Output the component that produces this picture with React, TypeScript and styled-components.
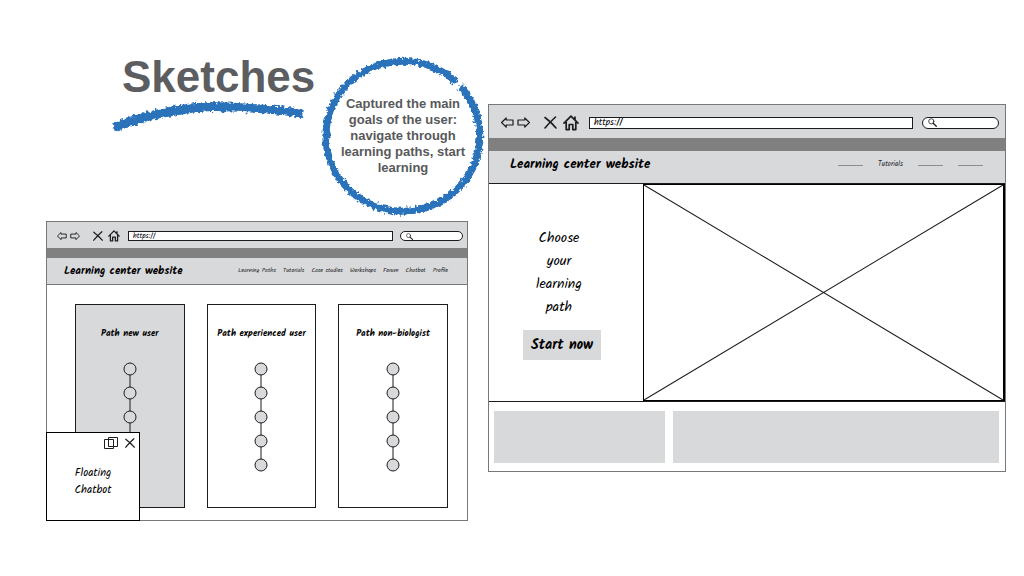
import React from "react";
import styled, { createGlobalStyle, css } from "styled-components";

const ink = "#1c1c1e";
const panel = "#d8d9db";
const band = "#808080";
const edge = "#77787a";
const blue = "#2a72ba";
const sans = '"Liberation Sans", Arial, sans-serif';
const hand = 'Kalam, Lato, "Open Sans", sans-serif';

type Sized = { $compact?: boolean };

const GlobalStyle = createGlobalStyle`
  *, *::before, *::after { box-sizing: border-box; }
  body { margin: 0; background: #fff; color: #000; font-family: ${hand}; }
  h1, h2, p, ul { margin: 0; padding: 0; }
  ul { list-style: none; }
  svg { display: block; overflow: visible; }
  button { border: 0; padding: 0; background: none; color: inherit; font: inherit; }
`;

const Board = styled.main`
  display: grid;
  grid-template-columns: minmax(0, 422fr) minmax(0, 518fr);
  column-gap: 20px;
  align-items: start;
  padding: 57px 18px 48px 46px;
`;

const Column = styled.section<{ $lowered?: boolean }>`
  display: flex;
  flex-direction: column;
  gap: 6px;
  padding-top: ${(p) => (p.$lowered ? "47px" : "0")};
`;

const Intro = styled.header`
  display: flex;
  justify-content: flex-end;
  gap: 6px;
  margin-right: -16px;
`;

const TitleBlock = styled.div`
  display: flex;
  flex-direction: column;
  width: 204px;
`;

const Title = styled.h1`
  padding-left: 10px;
  color: #5c5d60;
  font: bold 44px/40px ${sans};
`;

const Goal = styled.div`
  display: grid;
  place-items: center;
  width: 162px;
  height: 158px;

  > * { grid-area: 1 / 1; }
`;

const GoalText = styled.p`
  width: 130px;
  color: #58595b;
  font: bold 13px/16px ${sans};
  text-align: center;
`;

const Browser = styled.article`
  position: relative;
  border: 1px solid ${edge};
  background: #fff;
`;

const Toolbar = styled.div<Sized>`
  display: flex;
  align-items: center;
  height: ${(p) => (p.$compact ? "26px" : "33px")};
  padding: ${(p) => (p.$compact ? "2px 4px 0 10px" : "2px 6px 0 12px")};
  background: ${panel};
`;

const IconGroup = styled.div<{ $gap: number; $after: number }>`
  display: flex;
  align-items: center;
  gap: ${(p) => p.$gap}px;
  margin-right: ${(p) => p.$after}px;
`;

const fieldBase = css`
  min-width: 0;
  margin: 0;
  border: 1px solid ${ink};
  background: #fff;
  color: #000;
  outline: none;
`;

const Address = styled.input<Sized>`
  ${fieldBase}
  flex: 1;
  height: ${(p) => (p.$compact ? "10px" : "12px")};
  padding: 0 4px;
  font: ${(p) => (p.$compact ? "7px/8px" : "9px/10px")} ${hand};
`;

const SearchBox = styled.label<Sized>`
  ${fieldBase}
  display: flex;
  align-items: center;
  gap: 2px;
  width: ${(p) => (p.$compact ? "63px" : "77px")};
  height: ${(p) => (p.$compact ? "10px" : "12px")};
  margin-left: ${(p) => (p.$compact ? "7px" : "9px")};
  padding: 0 5px;
  border-radius: 6px;
`;

const SearchInput = styled.input`
  flex: 1;
  min-width: 0;
  height: 8px;
  padding: 0;
  border: 0;
  background: none;
  font: 7px/8px ${hand};
  outline: none;
`;

const Band = styled.div<Sized>`
  height: ${(p) => (p.$compact ? "10px" : "13px")};
  background: ${band};
`;

const SiteHeader = styled.div<Sized>`
  display: flex;
  align-items: center;
  justify-content: space-between;
  height: ${(p) => (p.$compact ? "27px" : "32px")};
  padding: ${(p) => (p.$compact ? "0 19px 0 17px" : "0 22px 4px 21px")};
  border-bottom: ${(p) => (p.$compact ? `1px solid ${edge}` : "0")};
  background: ${panel};
`;

const SiteName = styled.h2<Sized>`
  font: bold ${(p) => (p.$compact ? "11px/16px" : "13px/20px")} ${hand};
  white-space: nowrap;
`;

const Nav = styled.nav<Sized>`
  display: flex;
  align-items: center;
  gap: ${(p) => (p.$compact ? "7px" : "15px")};
`;

const NavLink = styled.a<Sized>`
  color: ${ink};
  font: ${(p) => (p.$compact ? "6px/8px" : "7px/10px")} ${hand};
  text-decoration: none;
  white-space: nowrap;
`;

const BlankLink = styled.a`
  width: 25px;
  height: 1px;
  background: #8b8c8e;
`;

const Paths = styled.ul`
  display: grid;
  grid-template-columns: repeat(3, minmax(0, 1fr));
  gap: 22px;
  padding: 19px 19px 12px 28px;
`;

const PathCard = styled.li<{ $active?: boolean }>`
  display: flex;
  flex-direction: column;
  align-items: center;
  gap: 20px;
  height: 204px;
  padding-top: 21px;
  border: 1px solid ${ink};
  background: ${(p) => (p.$active ? panel : "#fff")};
`;

const PathName = styled.h2`
  font: bold 9px/16px ${hand};
  white-space: nowrap;
`;

const Chatbot = styled.aside`
  position: absolute;
  left: -1px;
  bottom: -1px;
  width: 94px;
  height: 89px;
  padding: 4px 4px 0;
  border: 1px solid #000;
  background: #fff;
`;

const ChatActions = styled.div`
  display: flex;
  align-items: center;
  justify-content: flex-end;
  gap: 7px;
`;

const ChatText = styled.p`
  width: 50px;
  margin: 16px auto 0;
  font: 11px/17px ${hand};
  text-align: center;
`;

const Hero = styled.div`
  display: grid;
  grid-template-columns: minmax(0, 154fr) minmax(0, 362fr);
  grid-template-rows: minmax(0, 1fr);
  height: 219px;
  border: 1px solid ${ink};
  border-width: 1px 0;
`;

const Pitch = styled.div`
  display: flex;
  flex-direction: column;
  align-items: center;
  gap: 11px;
  padding: 43px 14px 0 0;
`;

const PitchText = styled.p`
  width: 64px;
  font: 14px/23px ${hand};
  text-align: center;
`;

const StartButton = styled.button`
  height: 30px;
  width: 78px;
  margin-left: 6px;
  background: ${panel};
  font: bold 14px/20px ${hand};
`;

const Picture = styled.div`
  border: 1px solid #000;
  border-right-width: 2px;

  svg { width: 100%; height: 100%; }
`;

const Tiles = styled.div`
  display: grid;
  grid-template-columns: minmax(0, 171fr) minmax(0, 326fr);
  gap: 8px;
  padding: 9px 6px 8px 5px;
`;

const Tile = styled.div`
  height: 52px;
  background: ${panel};
`;

function Chalk() {
  return (
    <filter id="chalk" x="-10%" y="-20%" width="120%" height="140%" colorInterpolationFilters="sRGB">
      <feTurbulence type="fractalNoise" baseFrequency="0.3" numOctaves="2" seed="4" result="noise" />
      <feDisplacementMap in="SourceGraphic" in2="noise" scale="6" xChannelSelector="R" yChannelSelector="G" />
    </filter>
  );
}

function Underline() {
  return (
    <svg width="204" height="40" viewBox="0 0 204 40" aria-hidden="true">
      <defs><Chalk /></defs>
      <g filter="url(#chalk)" fill={blue}>
        <path d="M0 26Q50 7 98 5Q145 6 192 12L190 21Q145 14 98 14Q50 17 3 35Z" />
      </g>
    </svg>
  );
}

function Ring() {
  return (
    <svg width="162" height="158" viewBox="0 0 162 158" aria-hidden="true">
      <g filter="url(#chalk)" fill="none" stroke={blue} strokeWidth="7">
        <path d="M134 25A77 75 0 1 0 138 29" />
      </g>
    </svg>
  );
}

function ArrowIcon({ size, flip }: { size: number; flip?: boolean }) {
  return (
    <svg width={size} height={size} viewBox="0 0 13 13" fill="none" stroke={ink} strokeWidth="1.2" strokeLinejoin="round">
      <path d={flip ? "M12.4 6.5 7.8 2V4H1V9H7.8V11.2Z" : "M.6 6.5 5.2 2V4H12V9H5.2V11.2Z"} />
    </svg>
  );
}

function CrossIcon({ size }: { size: number }) {
  return (
    <svg width={size} height={size} viewBox="0 0 13 13" fill="none" stroke={ink} strokeWidth="1.6" strokeLinecap="round">
      <path d="M1 1.5Q7 6 12 12M11.5 1Q6 6 1 12" />
    </svg>
  );
}

function HomeIcon({ size }: { size: number }) {
  return (
    <svg width={size} height={size} viewBox="0 0 16 16" fill="none" stroke={ink} strokeWidth="1.7" strokeLinejoin="round" strokeLinecap="round">
      <path d="M1 8.2 8 1.2 15 8.2M12 5V2.2M3.2 7V14.6H6.2V9.5H9.8V14.6H12.8V7" />
    </svg>
  );
}

function SearchIcon({ size }: { size: number }) {
  return (
    <svg width={size} height={size} viewBox="0 0 9 9" fill="none" stroke={ink} strokeLinecap="round">
      <circle cx="3.3" cy="3.3" r="2.6" strokeWidth="0.8" />
      <path d="M5.2 5.2 8.3 8.3" strokeWidth="1.3" />
    </svg>
  );
}

function CopyIcon() {
  return (
    <svg width="14" height="12" viewBox="0 0 14 12" fill="none" stroke={ink}>
      <path d="M.5 2.5H9.5V11.5H.5ZM4.5 .5H13.5V9.5H4.5Z" />
    </svg>
  );
}

function StepChain() {
  const stops = [7, 31, 55, 79, 103];
  return (
    <svg width="14" height="110" viewBox="0 0 14 110" stroke={ink} fill={panel} aria-hidden="true">
      <path d="M7 7V103" />
      {stops.map((y) => (
        <circle key={y} cx="7" cy={y} r="6" />
      ))}
    </svg>
  );
}

function BrowserBar({ compact }: { compact?: boolean }) {
  const icon = compact ? 10 : 13;
  return (
    <>
      <Toolbar $compact={compact}>
        <IconGroup $gap={3} $after={compact ? 13 : 14}>
          <button type="button" aria-label="Back"><ArrowIcon size={icon} /></button>
          <button type="button" aria-label="Forward"><ArrowIcon size={icon} flip /></button>
        </IconGroup>
        <IconGroup $gap={compact ? 5 : 6} $after={compact ? 8 : 10}>
          <button type="button" aria-label="Stop"><CrossIcon size={icon} /></button>
          <button type="button" aria-label="Home"><HomeIcon size={compact ? 12 : 16} /></button>
        </IconGroup>
        <Address $compact={compact} aria-label="Address" defaultValue="https://" />
        <SearchBox $compact={compact}>
          <SearchIcon size={compact ? 7 : 9} />
          <SearchInput type="text" aria-label="Search" />
        </SearchBox>
      </Toolbar>
      <Band $compact={compact} />
    </>
  );
}

const sections = ["Learning Paths", "Tutorials", "Case studies", "Workshops", "Forum", "Chatbot", "Profile"];
const paths = ["Path new user", "Path experienced user", "Path non-biologist"];

export default function App() {
  return (
    <>
      <GlobalStyle />
      <Board>
        <Column>
          <Intro>
            <TitleBlock>
              <Title>Sketches</Title>
              <Underline />
            </TitleBlock>
            <Goal>
              <Ring />
              <GoalText>Captured the main goals of the user: navigate through learning paths, start learning</GoalText>
            </Goal>
          </Intro>
          <Browser>
            <BrowserBar compact />
            <SiteHeader $compact>
              <SiteName $compact>Learning center website</SiteName>
              <Nav $compact aria-label="Sections">
                {sections.map((name) => (
                  <NavLink key={name} $compact href="#">{name}</NavLink>
                ))}
              </Nav>
            </SiteHeader>
            <Paths>
              {paths.map((name, i) => (
                <PathCard key={name} $active={i === 0}>
                  <PathName>{name}</PathName>
                  <StepChain />
                </PathCard>
              ))}
            </Paths>
            <Chatbot>
              <ChatActions>
                <button type="button" aria-label="Pop out"><CopyIcon /></button>
                <button type="button" aria-label="Close"><CrossIcon size={10} /></button>
              </ChatActions>
              <ChatText>Floating Chatbot</ChatText>
            </Chatbot>
          </Browser>
        </Column>
        <Column $lowered>
          <Browser>
            <BrowserBar />
            <SiteHeader>
              <SiteName>Learning center website</SiteName>
              <Nav aria-label="Pages">
                <BlankLink href="#" aria-label="First page" />
                <NavLink href="#">Tutorials</NavLink>
                <BlankLink href="#" aria-label="Third page" />
                <BlankLink href="#" aria-label="Fourth page" />
              </Nav>
            </SiteHeader>
            <Hero>
              <Pitch>
                <PitchText>Choose your learning path</PitchText>
                <StartButton type="button">Start now</StartButton>
              </Pitch>
              <Picture>
                <svg viewBox="0 0 100 100" preserveAspectRatio="none" stroke={ink} aria-hidden="true">
                  <path d="M0 0 100 100M100 0 0 100" vectorEffect="non-scaling-stroke" />
                </svg>
              </Picture>
            </Hero>
            <Tiles>
              <Tile />
              <Tile />
            </Tiles>
          </Browser>
        </Column>
      </Board>
    </>
  );
}
